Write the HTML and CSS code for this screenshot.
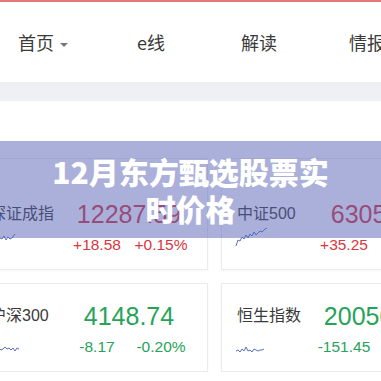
FILE: index.html
```html
<!DOCTYPE html>
<html lang="zh-CN">
<head>
    <meta charset="UTF-8">
    <meta name="viewport" content="width=device-width, initial-scale=1.0">
    <title>12月东方甄选股票实时价格</title>
    <link rel="stylesheet" href="styles.css">
</head>
<body>
    <div class="topbar"></div>
    <nav class="nav">
        <a class="nav-item">首页<span class="caret"></span></a>
        <a class="nav-item">e线</a>
        <a class="nav-item">解读</a>
        <a class="nav-item">情报</a>
    </nav>
    <div class="band"></div>

    <div class="cards">
        <div class="card card-first">
            <div class="label">深证成指</div>
            <div class="price up">12287.59</div>
            <svg class="spark" viewBox="0 0 32 20"><polyline points="0,4 3,1 5,5 7,2 9,6 11,3 13,4 15,1 17,5 19,2 21,4 23,3 26,-1"/></svg>
            <div class="chg up">+18.58</div>
            <div class="chg up">+0.15%</div>
        </div>
        <div class="card card-first">
            <div class="label">中证500</div>
            <div class="price up">6305.62</div>
            <svg class="spark" viewBox="0 0 32 20"><polyline points="0,11 2,5 4,6 6,2 8,4 10,0 12,3 14,-1 16,1 18,-3 20,0 22,-2 24,-4 26,-3 29,-6 31,-7"/></svg>
            <div class="chg up">+35.25</div>
            <div class="chg up">+0.56%</div>
        </div>
        <div class="card">
            <div class="label">沪深300</div>
            <div class="price down">4148.74</div>
            <svg class="spark" viewBox="0 0 32 20"><polyline points="0,12 2,10 4,13 6,9 8,12 10,11 12,13 14,12 16,10 18,12 20,11 22,13 24,11 26,14 28,11 30,12"/></svg>
            <div class="chg down">-8.17</div>
            <div class="chg down">-0.20%</div>
        </div>
        <div class="card">
            <div class="label">恒生指数</div>
            <div class="price down">20050.29</div>
            <svg class="spark" viewBox="0 0 32 20"><polyline points="0,14 2,13 4,15 6,12 8,14 10,10 12,14 14,13 16,15 18,12 20,13 22,14 24,13 26,13 28,12"/></svg>
            <div class="chg down">-151.45</div>
            <div class="chg down">-0.75%</div>
        </div>
    </div>

    <div class="overlay">
        <h1 class="title">12月东方甄选股票实时价格</h1>
    </div>
</body>
</html>
```

FILE: styles.css
```css
body {
    margin: 0;
    background: #fff;
    font-family: "Liberation Sans", "Noto Sans CJK SC", sans-serif;
    color: #333;
    overflow: hidden;
    position: relative;
}
.topbar {
    height: 2px;
    background: #e07878;
}
.nav {
    display: flex;
    height: 80px;
    align-items: center;
    margin-left: -11px;
}
.nav-item {
    width: 108px;
    flex-shrink: 0;
    text-align: center;
    font-family: "Noto Sans CJK SC", sans-serif;
    font-size: 18px;
    color: #3a3a3a;
}
.caret {
    display: inline-block;
    margin-left: 6px;
    vertical-align: middle;
    border-left: 4px solid transparent;
    border-right: 4px solid transparent;
    border-top: 4px solid #777;
}
.band {
    height: 19px;
    background: #eff0f4;
}
.cards {
    display: grid;
    grid-template-columns: 234px 234px;
    gap: 13px;
    margin: 57px 0 0 -26px;
}
.card {
    display: grid;
    grid-template-columns: 75px 64px 64px;
    grid-template-rows: 30px 20px;
    row-gap: 6px;
    padding: 17px 14px 14px 15px;
    border: 1px solid #ebebeb;
    box-shadow: 0 1px 2px rgba(0,0,0,0.04);
    background: #fff;
}
.card-first {
    padding-top: 40px;
}
.label {
    font-size: 16px;
    line-height: 30px;
    color: #3a3a3a;
    white-space: nowrap;
}
.price {
    grid-column: 2 / 4;
    text-align: center;
    font-size: 25px;
    line-height: 30px;
    white-space: nowrap;
}
.chg {
    text-align: center;
    font-size: 15.5px;
    line-height: 20px;
    white-space: nowrap;
}
.up {
    color: #d9363e;
}
.down {
    color: #27a359;
}
.spark {
    width: 32px;
    height: 20px;
    margin-left: -1px;
    overflow: visible;
}
.spark polyline {
    fill: none;
    stroke: #5a6ec4;
    stroke-width: 1;
}
.overlay {
    position: absolute;
    top: 141px;
    left: 0;
    right: 0;
    height: 97px;
    display: flex;
    align-items: center;
    justify-content: center;
    padding: 0 50px;
    background: rgba(85, 98, 180, 0.5);
}
.title {
    margin: 0;
    text-align: center;
    font-family: "Noto Sans CJK SC", sans-serif;
    font-size: 30px;
    line-height: 37px;
    font-weight: 900;
    color: #fff;
}
```
